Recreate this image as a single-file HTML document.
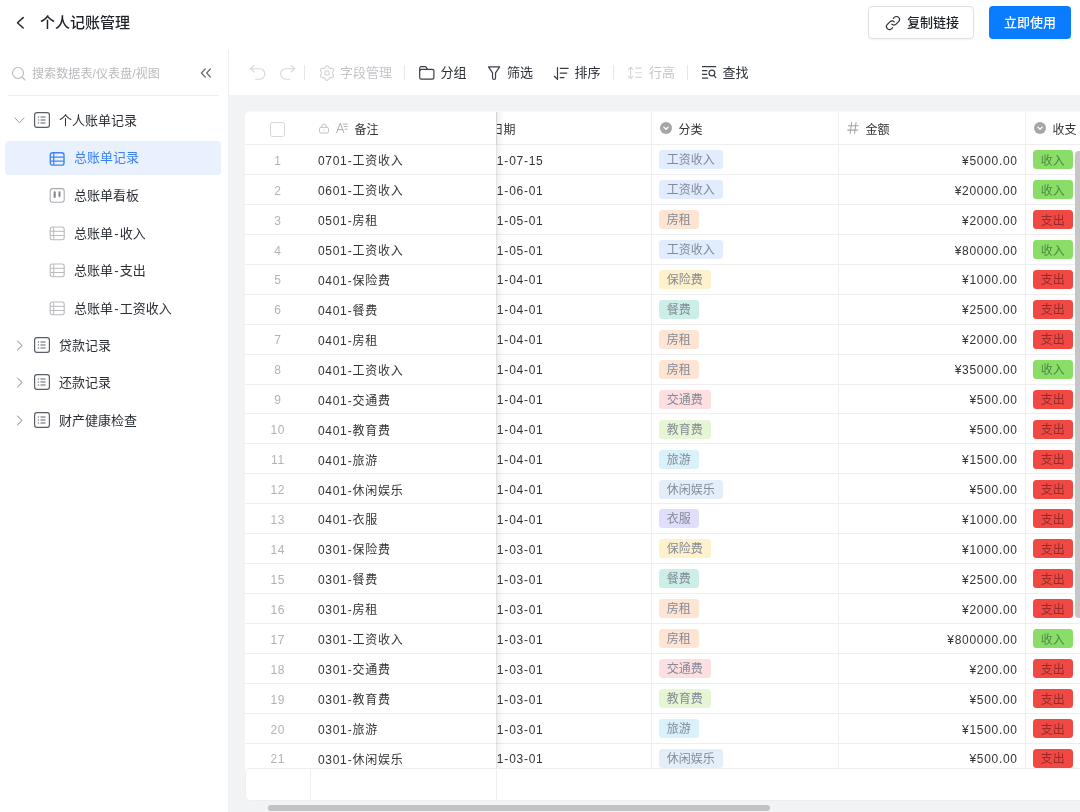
<!DOCTYPE html>
<html lang="zh-CN">
<head>
<meta charset="utf-8">
<title>个人记账管理</title>
<style>
*{box-sizing:border-box;margin:0;padding:0}
html,body{width:1080px;height:812px;overflow:hidden;background:#fff}
body{position:relative;font-family:"Liberation Sans","Noto Sans CJK SC",sans-serif;color:#1f2329;font-size:13px}
.abs{position:absolute}
/* header */
.hdr{position:absolute;left:0;top:0;width:1080px;height:50px;background:#fff}
.back{position:absolute;left:15px;top:15px}
.title{position:absolute;left:40px;top:11px;height:24px;line-height:24px;font-size:15px;font-weight:500;color:#1f2329;white-space:nowrap}
.btn{position:absolute;top:6px;height:33px;border-radius:4px;font-size:13px;font-weight:500;line-height:31px;white-space:nowrap}
.btn1{left:868px;width:106px;border:1px solid #dee0e3;background:#fff;color:#1f2329;box-shadow:0 1px 2px rgba(0,0,0,.06)}
.btn1 svg{position:absolute;left:16px;top:8px}
.btn1 span{position:absolute;left:38px;top:0}
.btn2{left:989px;width:82px;background:#0a7cff;color:#fff;text-align:center;line-height:33px}
/* sidebar */
.side{position:absolute;left:0;top:50px;width:229px;height:762px;background:#fff;border-right:1px solid #f0f0f1}
.sicon{position:absolute;left:11px;top:15.500px}
.ph{position:absolute;left:32px;top:14px;height:20px;line-height:20px;font-size:12px;color:#b9babd;white-space:nowrap;letter-spacing:.1px}
.coll{position:absolute;left:200px;top:17.400px}
.sline{position:absolute;left:8px;top:45px;width:211px;height:1px;background:#eeeff0}
.ti{position:absolute;left:5px;width:216px;height:33px;border-radius:4px;line-height:33px;font-size:13px;color:#2b2f36;white-space:nowrap}
.ti.sel{background:#e9f0fe;color:#3a82f6;height:34px;line-height:34px}
.shy{margin:0 1.200px}
.ti .chev{position:absolute;left:9px;top:11px}
.ti .gi{position:absolute;left:29px;top:8px}
.ti .gt{position:absolute;left:54px;top:0}
.ti .vi{position:absolute;left:44px;top:9px}
.ti .vt{position:absolute;left:69px;top:0}
/* toolbar */
.tb{position:absolute;left:229px;top:50px;width:851px;height:45px;background:#fff}
.tb .it{position:absolute;top:0;height:46px;line-height:46px;font-size:13px;color:#2b2f36;white-space:nowrap}
.tb .it.dis{color:#c3c5c9}
.tb svg{position:absolute;top:15px}
.tb .sep{position:absolute;top:15px;width:1px;height:15px;background:#e6e7e9}
/* main */
.main{position:absolute;left:229px;top:95px;width:851px;height:717px;background:#f2f3f4;overflow:hidden}
.card{position:absolute;left:16px;top:17px;width:850px;height:689px;background:#fff;border-radius:5px 0 0 5px;overflow:hidden}
.scroll{position:absolute;left:220px;top:0;width:900px}
.frozen{position:absolute;left:0;top:0;width:251px;background:#fff}
.tr{display:flex;height:29.940px;border-bottom:1px solid #eeeeee;font-size:12px;color:#333}
.tr.th{height:33px}
.td{height:100%;border-right:1px solid #eeeeee;padding:.5px 8px 0 7px;display:flex;align-items:center;white-space:nowrap;flex:none}
.c-idx{width:65px;justify-content:center;color:#b0b2b6;padding:.5px 0 0;border-right:none}
.c-note{width:186px;border-right:none;padding-left:8px}
.c-date{width:187px}
.c-cat{width:187px}
.c-amt{width:187px}
.c-io{width:187px}
.c-amt .num{margin-left:auto;margin-right:-.7px}
.tr:not(.th) .c-amt{justify-content:flex-end}
.num{letter-spacing:.7px;position:relative;top:1px}
.hy{letter-spacing:0;margin:0 .9px 0 .2px}
.c-note .num{top:0}
.c-idx span{position:relative;top:1px;letter-spacing:.7px;margin-right:-.7px}
.c-date{padding-left:10px!important}
.c-date .num{letter-spacing:.6px}
.th .td{color:#333}
.hi{display:inline-flex;width:12px;margin-right:6.600px;position:relative;top:0}
.hi.lock{width:10.500px;margin-right:6.600px}
.hi.atx{width:12.200px;margin-right:6.600px}
.th .td{padding-left:8px!important}
.th .c-note{padding-left:8.500px!important}
.th .c-idx{padding-left:0!important}
.cb{width:15px;height:15px;border:1px solid #d4d6d8;border-radius:2.5px;background:#fff;display:block;position:relative;top:-1px}
.tag{display:inline-block;height:19px;line-height:18px;padding:1px 7.800px 0;border-radius:3.500px;font-size:12px;color:#838997}
.c-blue{background:#e1ecfe}
.c-orange{background:#fee4d2}
.c-yellow{background:#fdf2cb}
.c-teal{background:#cbefe7}
.c-pink{background:#fddfe2}
.c-green{background:#e6f5d3}
.c-cyan{background:#d9f1fb}
.c-pale{background:#e4eefb}
.c-purple{background:#e0defb}
.t-in{background:#8ade68;color:#4d8842}
.t-in,.t-out{padding-top:1.500px!important}
.t-out{background:#f04842;color:#98292b}
.fshadow{position:absolute;left:251px;top:0;width:9px;height:690px;background:linear-gradient(90deg,rgba(0,0,0,.13),rgba(0,0,0,.06) 18%,rgba(0,0,0,.025) 50%,rgba(0,0,0,0))}
.foot{position:absolute;left:0;top:656px;width:860px;height:33px;background:#fff;border:1px solid #eeeeee;border-radius:5px 0 0 5px}
.foot .f1{position:absolute;left:64px;top:0;width:1px;height:33px;background:#eeeeee}
.foot .f2{position:absolute;left:250px;top:0;width:1px;height:33px;background:#eeeeee}
.vbar{position:absolute;left:830px;top:39px;width:8px;height:467px;border-radius:4px;background:#c5c6c6}
.hbar{position:absolute;left:39px;top:710px;width:502px;height:6px;border-radius:3px;background:#c1c2c4}

.cardtop{position:absolute;left:19px;top:16px;width:840px;height:1px;background:rgba(255,255,255,.55)}

.hdr,.side,.tb,.main{will-change:transform}
.fhl{position:absolute;left:251px;top:0;width:1px;height:33px;background:#d6d6d6}

</style>
</head>
<body>
<div class="hdr">
<svg class="back" width="12" height="16" viewBox="0 0 12 16"><path d="M8.200 2.600 L2.500 7.800 L8.200 13" fill="none" stroke="#1f2329" stroke-width="1.450" stroke-linecap="round" stroke-linejoin="round"/></svg>
<div class="title">个人记账管理</div>
<div class="btn btn1"><svg width="16" height="16" viewBox="0 0 16 16"><path d="M6.800 9.200a3 3 0 0 0 4.300 0l2.500-2.500a3 3 0 0 0-4.300-4.300L8.300 3.400" fill="none" stroke="#2b2f36" stroke-width="1.200" stroke-linecap="round"/><path d="M9.200 6.800a3 3 0 0 0-4.300 0L2.400 9.300a3 3 0 0 0 4.300 4.300l1-1" fill="none" stroke="#2b2f36" stroke-width="1.200" stroke-linecap="round"/></svg><span>复制链接</span></div>
<div class="btn btn2">立即使用</div>
</div>
<div class="side">
<svg class="sicon" width="16" height="16" viewBox="0 0 16 16"><circle cx="7" cy="7" r="5.500" fill="none" stroke="#b9babd" stroke-width="1.100"/><path d="M11 11l3 3" stroke="#b9babd" stroke-width="1.100" stroke-linecap="round"/></svg>
<div class="ph">搜索数据表/仪表盘/视图</div>
<svg class="coll" width="12" height="12" viewBox="0 0 12 12"><path d="M5.200 2 L1.400 6 L5.200 10 M10.400 2 L6.600 6 L10.400 10" fill="none" stroke="#6a6d73" stroke-width="1.250" stroke-linecap="round" stroke-linejoin="round"/></svg>
<div class="sline"></div>
<div class="ti" style="top:54px"><svg class="chev" width="11" height="11" viewBox="0 0 11 11"><path d="M1 3 L5.500 7.800 L10 3" fill="none" stroke="#9a9da3" stroke-width="1" stroke-linecap="round" stroke-linejoin="round"/></svg><svg class="gi" width="16" height="16" viewBox="0 0 16 16"><rect x=".6" y=".6" width="14.800" height="14.800" rx="2.400" fill="none" stroke="#5a5e66" stroke-width="1.200"/><path d="M6.500 5h5M6.500 8h5M6.500 11h5" stroke="#5a5e66" stroke-width="1.100"/><path d="M3.800 5h1.300M3.800 8h1.300M3.800 11h1.300" stroke="#5a5e66" stroke-width="1.100"/></svg><span class="gt">个人账单记录</span></div>
<div class="ti sel" style="top:91px"><svg class="vi" style="top:10.600px" width="16" height="14" viewBox="0 0 16 14"><rect x="1.300" y=".7" width="13.700" height="12.400" rx="2.200" fill="none" stroke="#3d84f7" stroke-width="1.400"/><path d="M4.700 .7v12.400M1.300 5h13.700M1.300 9.200h13.700" stroke="#3d84f7" stroke-width="1.250" fill="none"/></svg><span class="vt">总账单记录</span></div>
<div class="ti" style="top:129.300px"><svg class="vi" width="16" height="15" viewBox="0 0 16 15"><rect x="1.200" y=".6" width="14" height="13.600" rx="2.400" fill="none" stroke="#a9acb0" stroke-width="1.100"/><path d="M5.700 4.400v4.600M10.500 4.400v3.700" stroke="#85888e" stroke-width="2.100" stroke-linecap="round"/></svg><span class="vt">总账单看板</span></div>
<div class="ti" style="top:166.700px"><svg class="vi" width="16" height="15" viewBox="0 0 16 15"><rect x="1.200" y="1" width="14" height="12.800" rx="2.200" fill="none" stroke="#b9bbbf" stroke-width="1.100"/><path d="M4.700 1v12.800M1.200 5.300h14M1.200 9.500h14" stroke="#b9bbbf" stroke-width="1" fill="none"/></svg><span class="vt">总账单<span class="shy">-</span>收入</span></div>
<div class="ti" style="top:204.100px"><svg class="vi" width="16" height="15" viewBox="0 0 16 15"><rect x="1.200" y="1" width="14" height="12.800" rx="2.200" fill="none" stroke="#b9bbbf" stroke-width="1.100"/><path d="M4.700 1v12.800M1.200 5.300h14M1.200 9.500h14" stroke="#b9bbbf" stroke-width="1" fill="none"/></svg><span class="vt">总账单<span class="shy">-</span>支出</span></div>
<div class="ti" style="top:241.500px"><svg class="vi" width="16" height="15" viewBox="0 0 16 15"><rect x="1.200" y="1" width="14" height="12.800" rx="2.200" fill="none" stroke="#b9bbbf" stroke-width="1.100"/><path d="M4.700 1v12.800M1.200 5.300h14M1.200 9.500h14" stroke="#b9bbbf" stroke-width="1" fill="none"/></svg><span class="vt">总账单<span class="shy">-</span>工资收入</span></div>
<div class="ti" style="top:279px"><svg class="chev" width="11" height="11" viewBox="0 0 11 11"><path d="M3.500 1 L8 5.500 L3.500 10" fill="none" stroke="#7a7d83" stroke-width="1" stroke-linecap="round" stroke-linejoin="round"/></svg><svg class="gi" width="16" height="16" viewBox="0 0 16 16"><rect x=".6" y=".6" width="14.800" height="14.800" rx="2.400" fill="none" stroke="#5a5e66" stroke-width="1.200"/><path d="M6.500 5h5M6.500 8h5M6.500 11h5" stroke="#5a5e66" stroke-width="1.100"/><path d="M3.800 5h1.300M3.800 8h1.300M3.800 11h1.300" stroke="#5a5e66" stroke-width="1.100"/></svg><span class="gt">贷款记录</span></div>
<div class="ti" style="top:316.400px"><svg class="chev" width="11" height="11" viewBox="0 0 11 11"><path d="M3.500 1 L8 5.500 L3.500 10" fill="none" stroke="#7a7d83" stroke-width="1" stroke-linecap="round" stroke-linejoin="round"/></svg><svg class="gi" width="16" height="16" viewBox="0 0 16 16"><rect x=".6" y=".6" width="14.800" height="14.800" rx="2.400" fill="none" stroke="#5a5e66" stroke-width="1.200"/><path d="M6.500 5h5M6.500 8h5M6.500 11h5" stroke="#5a5e66" stroke-width="1.100"/><path d="M3.800 5h1.300M3.800 8h1.300M3.800 11h1.300" stroke="#5a5e66" stroke-width="1.100"/></svg><span class="gt">还款记录</span></div>
<div class="ti" style="top:353.800px"><svg class="chev" width="11" height="11" viewBox="0 0 11 11"><path d="M3.500 1 L8 5.500 L3.500 10" fill="none" stroke="#7a7d83" stroke-width="1" stroke-linecap="round" stroke-linejoin="round"/></svg><svg class="gi" width="16" height="16" viewBox="0 0 16 16"><rect x=".6" y=".6" width="14.800" height="14.800" rx="2.400" fill="none" stroke="#5a5e66" stroke-width="1.200"/><path d="M6.500 5h5M6.500 8h5M6.500 11h5" stroke="#5a5e66" stroke-width="1.100"/><path d="M3.800 5h1.300M3.800 8h1.300M3.800 11h1.300" stroke="#5a5e66" stroke-width="1.100"/></svg><span class="gt">财产健康检查</span></div>
</div>
<div class="tb">
<svg style="left:21px" width="16" height="16" viewBox="0 0 16 16"><path d="M4.200 .4 L.6 3.700 L4.200 7 M.6 3.700 H9.600 a5.250 5.250 0 0 1 0 10.500 H5.700" fill="none" stroke="#d6d7da" stroke-width="1.100" stroke-linecap="round" stroke-linejoin="round"/></svg>
<svg style="left:51px" width="16" height="16" viewBox="0 0 16 16"><path d="M11.100 .4 L14.700 3.700 L11.100 7 M14.700 3.700 H5.900 a5.250 5.250 0 0 0 0 10.500 H9.600" fill="none" stroke="#d6d7da" stroke-width="1.100" stroke-linecap="round" stroke-linejoin="round"/></svg>
<div class="sep" style="left:75px"></div>
<svg style="left:89.500px" width="16" height="16" viewBox="0 0 16 16"><path d="M13.50 8.00 L13.56 7.64 L13.73 7.25 L13.97 6.81 L14.23 6.33 L14.45 5.81 L14.58 5.27 L14.57 4.76 L14.41 4.30 L14.09 3.93 L13.65 3.66 L13.12 3.51 L12.56 3.44 L12.01 3.42 L11.52 3.42 L11.10 3.37 L10.75 3.24 L10.46 3.00 L10.21 2.66 L9.96 2.24 L9.67 1.77 L9.33 1.32 L8.93 0.94 L8.48 0.69 L8.00 0.60 L7.52 0.69 L7.07 0.94 L6.67 1.32 L6.33 1.77 L6.04 2.24 L5.79 2.66 L5.54 3.00 L5.25 3.24 L4.90 3.37 L4.48 3.42 L3.99 3.42 L3.44 3.44 L2.88 3.51 L2.35 3.66 L1.91 3.93 L1.59 4.30 L1.43 4.76 L1.42 5.27 L1.55 5.81 L1.77 6.33 L2.03 6.81 L2.27 7.25 L2.44 7.64 L2.50 8.00 L2.44 8.36 L2.27 8.75 L2.03 9.19 L1.77 9.67 L1.55 10.19 L1.42 10.73 L1.43 11.24 L1.59 11.70 L1.91 12.07 L2.35 12.34 L2.88 12.49 L3.44 12.56 L3.99 12.58 L4.48 12.58 L4.90 12.63 L5.25 12.76 L5.54 13.00 L5.79 13.34 L6.04 13.76 L6.33 14.23 L6.67 14.68 L7.07 15.06 L7.52 15.31 L8.00 15.40 L8.48 15.31 L8.93 15.06 L9.33 14.68 L9.67 14.23 L9.96 13.76 L10.21 13.34 L10.46 13.00 L10.75 12.76 L11.10 12.63 L11.52 12.58 L12.01 12.58 L12.56 12.56 L13.12 12.49 L13.65 12.34 L14.09 12.07 L14.41 11.70 L14.57 11.24 L14.58 10.73 L14.45 10.19 L14.23 9.67 L13.97 9.19 L13.73 8.75 L13.56 8.36Z" fill="none" stroke="#d0d2d5" stroke-width="1.100" stroke-linejoin="round"/><circle cx="8" cy="8" r="2.250" fill="none" stroke="#d0d2d5" stroke-width="1.100"/></svg>
<div class="it dis" style="left:111px">字段管理</div>
<div class="sep" style="left:175px"></div>
<svg style="left:189px" width="18" height="16" viewBox="0 0 18 16"><path d="M1.700 6 V3.300 a1.600 1.600 0 0 1 1.600-1.600 H7 q.9 0 1.400 .8 L9.500 4.400" fill="none" stroke="#3a3e45" stroke-width="1.200" stroke-linejoin="round"/><rect x="1.700" y="4.400" width="14.200" height="9.800" rx="1.700" fill="none" stroke="#3a3e45" stroke-width="1.200"/></svg>
<div class="it" style="left:211.500px">分组</div>
<svg style="left:258px" width="15" height="16" viewBox="0 0 15 16"><path d="M1.500 1.900 H12.600 L8.550 7.800 V12.900 a1.500 1.500 0 0 1 -3 0 V7.800 Z" fill="none" stroke="#3a3e45" stroke-width="1.200" stroke-linejoin="round"/></svg>
<div class="it" style="left:278px">筛选</div>
<svg style="left:324px;top:12px" width="16" height="20" viewBox="0 0 16 20"><path d="M4.500 5.500 V17 M1.300 14.200 L4.500 17.300" fill="none" stroke="#3a3e45" stroke-width="1.200" stroke-linecap="round" stroke-linejoin="round"/><path d="M6.800 6.400 h8.800 M6.800 11.100 h7.400 M6.800 15.700 h4.600" stroke="#3a3e45" stroke-width="1.200"/></svg>
<div class="it" style="left:345.500px">排序</div>
<div class="sep" style="left:384px"></div>
<svg style="left:398px" width="16" height="16" viewBox="0 0 16 16"><path d="M3.600 2.200 v11.400 M1.400 4.400 L3.600 2.200 L5.800 4.400 M1.400 11.400 L3.600 13.600 L5.800 11.400" fill="none" stroke="#d6d7da" stroke-width="1.100" stroke-linecap="round" stroke-linejoin="round"/><path d="M8.200 3.100 h6.800 M8.200 7.700 h6.800 M8.200 12.400 h6.800" stroke="#d6d7da" stroke-width="1.100"/></svg>
<div class="it dis" style="left:420px">行高</div>
<div class="sep" style="left:458px"></div>
<svg style="left:472px" width="16" height="16" viewBox="0 0 16 16"><path d="M1 1.600 h14.100 M1 5.700 h5.300 M1 9.400 h5.300 M1 13.100 h6.200" stroke="#3a3e45" stroke-width="1.200"/><circle cx="10.900" cy="8" r="2.900" fill="none" stroke="#3a3e45" stroke-width="1.200"/><path d="M13 10.300 l1.800 2.300" stroke="#3a3e45" stroke-width="1.200" stroke-linecap="round"/></svg>
<div class="it" style="left:493.500px">查找</div>
</div>
<div class="main">
<div class="cardtop"></div>
<div class="card">
<div class="scroll">
<div class="tr th"><div class="td c-date"><span class="hi"><svg width="12" height="12" viewBox="0 0 12 12"><rect x="1" y="2" width="10" height="9" rx="1.5" fill="none" stroke="#999" stroke-width="1"/><path d="M1 5h10M3.5 .8v2.4M8.5 .8v2.4" stroke="#999" stroke-width="1" fill="none"/></svg></span><span class="ht">日期</span></div><div class="td c-cat"><span class="hi"><svg width="12" height="12" viewBox="0 0 12 12"><circle cx="6" cy="6" r="6" fill="#a6a6a6"/><path d="M3.9 5.2 L6 7.3 L8.1 5.2" fill="none" stroke="#fff" stroke-width="1.3" stroke-linecap="round" stroke-linejoin="round"/></svg></span><span class="ht">分类</span></div><div class="td c-amt"><span class="hi"><svg width="12" height="12" viewBox="0 0 12 12"><path d="M4.700 .3 L3.100 11.700 M9.100 .3 L7.500 11.700 M.9 3.700h10.800 M.3 8.100h10.800" fill="none" stroke="#a2a4a8" stroke-width="1.050"/></svg></span><span class="ht">金额</span></div><div class="td c-io"><span class="hi"><svg width="12" height="12" viewBox="0 0 12 12"><circle cx="6" cy="6" r="6" fill="#a6a6a6"/><path d="M3.9 5.2 L6 7.3 L8.1 5.2" fill="none" stroke="#fff" stroke-width="1.3" stroke-linecap="round" stroke-linejoin="round"/></svg></span><span class="ht">收支</span></div></div>
<div class="tr"><div class="td c-date"><span class="num">2021<span class="hy">-</span>07<span class="hy">-</span>15</span></div><div class="td c-cat"><span class="tag c-blue">工资收入</span></div><div class="td c-amt"><span class="num">¥5000.00</span></div><div class="td c-io"><span class="tag t-in">收入</span></div></div>
<div class="tr"><div class="td c-date"><span class="num">2021<span class="hy">-</span>06<span class="hy">-</span>01</span></div><div class="td c-cat"><span class="tag c-blue">工资收入</span></div><div class="td c-amt"><span class="num">¥20000.00</span></div><div class="td c-io"><span class="tag t-in">收入</span></div></div>
<div class="tr"><div class="td c-date"><span class="num">2021<span class="hy">-</span>05<span class="hy">-</span>01</span></div><div class="td c-cat"><span class="tag c-orange">房租</span></div><div class="td c-amt"><span class="num">¥2000.00</span></div><div class="td c-io"><span class="tag t-out">支出</span></div></div>
<div class="tr"><div class="td c-date"><span class="num">2021<span class="hy">-</span>05<span class="hy">-</span>01</span></div><div class="td c-cat"><span class="tag c-blue">工资收入</span></div><div class="td c-amt"><span class="num">¥80000.00</span></div><div class="td c-io"><span class="tag t-in">收入</span></div></div>
<div class="tr"><div class="td c-date"><span class="num">2021<span class="hy">-</span>04<span class="hy">-</span>01</span></div><div class="td c-cat"><span class="tag c-yellow">保险费</span></div><div class="td c-amt"><span class="num">¥1000.00</span></div><div class="td c-io"><span class="tag t-out">支出</span></div></div>
<div class="tr"><div class="td c-date"><span class="num">2021<span class="hy">-</span>04<span class="hy">-</span>01</span></div><div class="td c-cat"><span class="tag c-teal">餐费</span></div><div class="td c-amt"><span class="num">¥2500.00</span></div><div class="td c-io"><span class="tag t-out">支出</span></div></div>
<div class="tr"><div class="td c-date"><span class="num">2021<span class="hy">-</span>04<span class="hy">-</span>01</span></div><div class="td c-cat"><span class="tag c-orange">房租</span></div><div class="td c-amt"><span class="num">¥2000.00</span></div><div class="td c-io"><span class="tag t-out">支出</span></div></div>
<div class="tr"><div class="td c-date"><span class="num">2021<span class="hy">-</span>04<span class="hy">-</span>01</span></div><div class="td c-cat"><span class="tag c-orange">房租</span></div><div class="td c-amt"><span class="num">¥35000.00</span></div><div class="td c-io"><span class="tag t-in">收入</span></div></div>
<div class="tr"><div class="td c-date"><span class="num">2021<span class="hy">-</span>04<span class="hy">-</span>01</span></div><div class="td c-cat"><span class="tag c-pink">交通费</span></div><div class="td c-amt"><span class="num">¥500.00</span></div><div class="td c-io"><span class="tag t-out">支出</span></div></div>
<div class="tr"><div class="td c-date"><span class="num">2021<span class="hy">-</span>04<span class="hy">-</span>01</span></div><div class="td c-cat"><span class="tag c-green">教育费</span></div><div class="td c-amt"><span class="num">¥500.00</span></div><div class="td c-io"><span class="tag t-out">支出</span></div></div>
<div class="tr"><div class="td c-date"><span class="num">2021<span class="hy">-</span>04<span class="hy">-</span>01</span></div><div class="td c-cat"><span class="tag c-cyan">旅游</span></div><div class="td c-amt"><span class="num">¥1500.00</span></div><div class="td c-io"><span class="tag t-out">支出</span></div></div>
<div class="tr"><div class="td c-date"><span class="num">2021<span class="hy">-</span>04<span class="hy">-</span>01</span></div><div class="td c-cat"><span class="tag c-pale">休闲娱乐</span></div><div class="td c-amt"><span class="num">¥500.00</span></div><div class="td c-io"><span class="tag t-out">支出</span></div></div>
<div class="tr"><div class="td c-date"><span class="num">2021<span class="hy">-</span>04<span class="hy">-</span>01</span></div><div class="td c-cat"><span class="tag c-purple">衣服</span></div><div class="td c-amt"><span class="num">¥1000.00</span></div><div class="td c-io"><span class="tag t-out">支出</span></div></div>
<div class="tr"><div class="td c-date"><span class="num">2021<span class="hy">-</span>03<span class="hy">-</span>01</span></div><div class="td c-cat"><span class="tag c-yellow">保险费</span></div><div class="td c-amt"><span class="num">¥1000.00</span></div><div class="td c-io"><span class="tag t-out">支出</span></div></div>
<div class="tr"><div class="td c-date"><span class="num">2021<span class="hy">-</span>03<span class="hy">-</span>01</span></div><div class="td c-cat"><span class="tag c-teal">餐费</span></div><div class="td c-amt"><span class="num">¥2500.00</span></div><div class="td c-io"><span class="tag t-out">支出</span></div></div>
<div class="tr"><div class="td c-date"><span class="num">2021<span class="hy">-</span>03<span class="hy">-</span>01</span></div><div class="td c-cat"><span class="tag c-orange">房租</span></div><div class="td c-amt"><span class="num">¥2000.00</span></div><div class="td c-io"><span class="tag t-out">支出</span></div></div>
<div class="tr"><div class="td c-date"><span class="num">2021<span class="hy">-</span>03<span class="hy">-</span>01</span></div><div class="td c-cat"><span class="tag c-orange">房租</span></div><div class="td c-amt"><span class="num">¥800000.00</span></div><div class="td c-io"><span class="tag t-in">收入</span></div></div>
<div class="tr"><div class="td c-date"><span class="num">2021<span class="hy">-</span>03<span class="hy">-</span>01</span></div><div class="td c-cat"><span class="tag c-pink">交通费</span></div><div class="td c-amt"><span class="num">¥200.00</span></div><div class="td c-io"><span class="tag t-out">支出</span></div></div>
<div class="tr"><div class="td c-date"><span class="num">2021<span class="hy">-</span>03<span class="hy">-</span>01</span></div><div class="td c-cat"><span class="tag c-green">教育费</span></div><div class="td c-amt"><span class="num">¥500.00</span></div><div class="td c-io"><span class="tag t-out">支出</span></div></div>
<div class="tr"><div class="td c-date"><span class="num">2021<span class="hy">-</span>03<span class="hy">-</span>01</span></div><div class="td c-cat"><span class="tag c-cyan">旅游</span></div><div class="td c-amt"><span class="num">¥1500.00</span></div><div class="td c-io"><span class="tag t-out">支出</span></div></div>
<div class="tr"><div class="td c-date"><span class="num">2021<span class="hy">-</span>03<span class="hy">-</span>01</span></div><div class="td c-cat"><span class="tag c-pale">休闲娱乐</span></div><div class="td c-amt"><span class="num">¥500.00</span></div><div class="td c-io"><span class="tag t-out">支出</span></div></div>
</div>
<div class="frozen">
<div class="tr th"><div class="td c-idx"><span class="cb"></span></div><div class="td c-note"><span class="hi lock"><svg width="11" height="11" viewBox="0 0 11 11"><rect x=".6" y="4.300" width="9.300" height="5.900" rx="1.300" fill="none" stroke="#bcbec2" stroke-width="1"/><path d="M2.900 4.300V3.100a2.350 2.350 0 0 1 4.700 0v1.200" fill="none" stroke="#bcbec2" stroke-width="1"/><path d="M4.900 6.800l.7.700" stroke="#bcbec2" stroke-width=".9" stroke-linecap="round"/></svg></span><span class="hi atx"><svg width="13" height="12" viewBox="0 0 13 12"><path d="M.5 11.300 L4.500 .9 L8.500 11.300 M1.900 7.800h5.200" fill="none" stroke="#a4a6aa" stroke-width="1" stroke-linejoin="round"/><path d="M7.100 1.800h5.300M8.300 4.400h4.100M9.300 7.300h3.100" fill="none" stroke="#a4a6aa" stroke-width=".9"/></svg></span><span class="ht">备注</span></div></div>
<div class="tr"><div class="td c-idx"><span>1</span></div><div class="td c-note"><span class="num">0701<span class="hy">-</span>工资收入</span></div></div>
<div class="tr"><div class="td c-idx"><span>2</span></div><div class="td c-note"><span class="num">0601<span class="hy">-</span>工资收入</span></div></div>
<div class="tr"><div class="td c-idx"><span>3</span></div><div class="td c-note"><span class="num">0501<span class="hy">-</span>房租</span></div></div>
<div class="tr"><div class="td c-idx"><span>4</span></div><div class="td c-note"><span class="num">0501<span class="hy">-</span>工资收入</span></div></div>
<div class="tr"><div class="td c-idx"><span>5</span></div><div class="td c-note"><span class="num">0401<span class="hy">-</span>保险费</span></div></div>
<div class="tr"><div class="td c-idx"><span>6</span></div><div class="td c-note"><span class="num">0401<span class="hy">-</span>餐费</span></div></div>
<div class="tr"><div class="td c-idx"><span>7</span></div><div class="td c-note"><span class="num">0401<span class="hy">-</span>房租</span></div></div>
<div class="tr"><div class="td c-idx"><span>8</span></div><div class="td c-note"><span class="num">0401<span class="hy">-</span>工资收入</span></div></div>
<div class="tr"><div class="td c-idx"><span>9</span></div><div class="td c-note"><span class="num">0401<span class="hy">-</span>交通费</span></div></div>
<div class="tr"><div class="td c-idx"><span>10</span></div><div class="td c-note"><span class="num">0401<span class="hy">-</span>教育费</span></div></div>
<div class="tr"><div class="td c-idx"><span>11</span></div><div class="td c-note"><span class="num">0401<span class="hy">-</span>旅游</span></div></div>
<div class="tr"><div class="td c-idx"><span>12</span></div><div class="td c-note"><span class="num">0401<span class="hy">-</span>休闲娱乐</span></div></div>
<div class="tr"><div class="td c-idx"><span>13</span></div><div class="td c-note"><span class="num">0401<span class="hy">-</span>衣服</span></div></div>
<div class="tr"><div class="td c-idx"><span>14</span></div><div class="td c-note"><span class="num">0301<span class="hy">-</span>保险费</span></div></div>
<div class="tr"><div class="td c-idx"><span>15</span></div><div class="td c-note"><span class="num">0301<span class="hy">-</span>餐费</span></div></div>
<div class="tr"><div class="td c-idx"><span>16</span></div><div class="td c-note"><span class="num">0301<span class="hy">-</span>房租</span></div></div>
<div class="tr"><div class="td c-idx"><span>17</span></div><div class="td c-note"><span class="num">0301<span class="hy">-</span>工资收入</span></div></div>
<div class="tr"><div class="td c-idx"><span>18</span></div><div class="td c-note"><span class="num">0301<span class="hy">-</span>交通费</span></div></div>
<div class="tr"><div class="td c-idx"><span>19</span></div><div class="td c-note"><span class="num">0301<span class="hy">-</span>教育费</span></div></div>
<div class="tr"><div class="td c-idx"><span>20</span></div><div class="td c-note"><span class="num">0301<span class="hy">-</span>旅游</span></div></div>
<div class="tr"><div class="td c-idx"><span>21</span></div><div class="td c-note"><span class="num">0301<span class="hy">-</span>休闲娱乐</span></div></div>
</div>
<div class="fshadow"></div>
<div class="fhl"></div>
<div class="foot"><div class="f1"></div><div class="f2"></div></div>
<div class="vbar"></div>
</div>
<div class="hbar"></div>
</div>
</body>
</html>
